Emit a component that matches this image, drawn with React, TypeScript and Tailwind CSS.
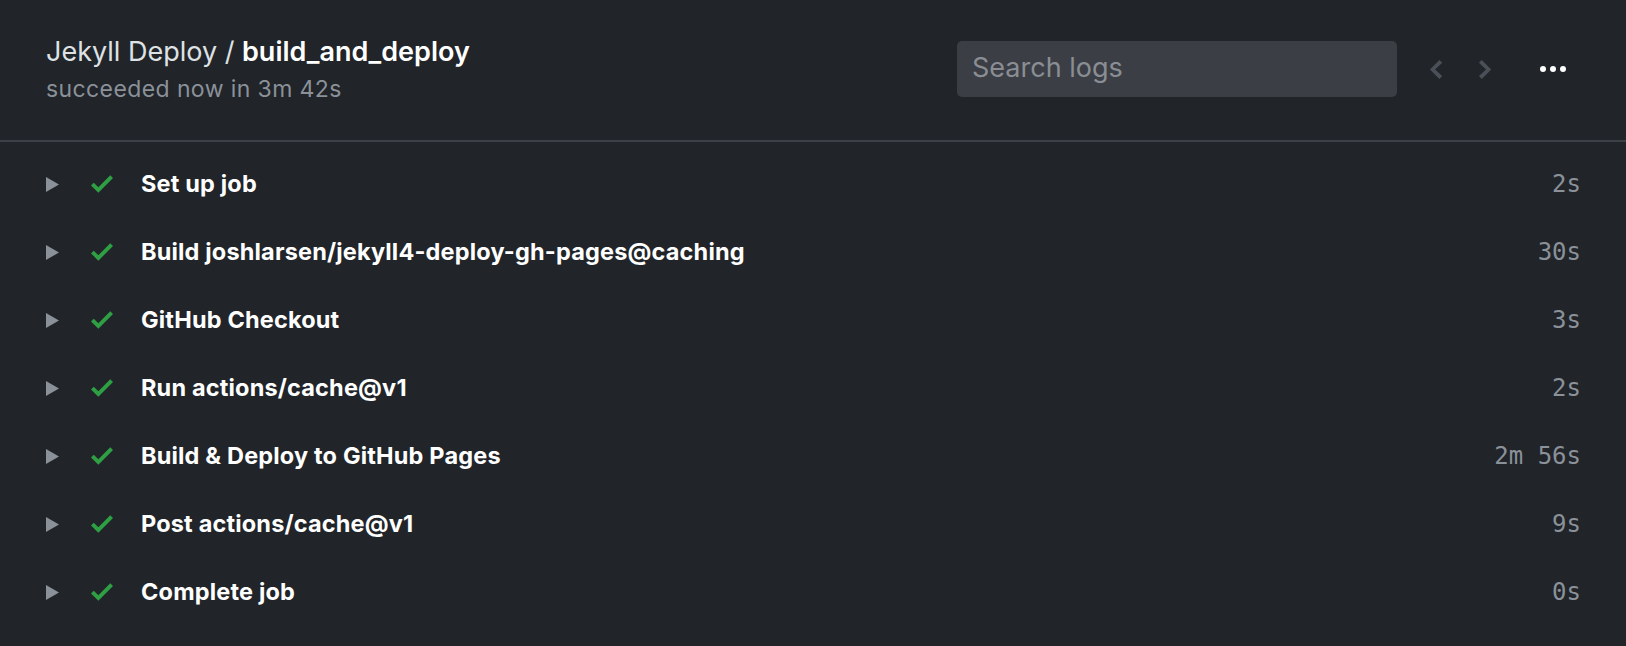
const steps = [
  { name: 'Set up job', time: '2s' },
  { name: 'Build joshlarsen/jekyll4-deploy-gh-pages@caching', time: '30s' },
  { name: 'GitHub Checkout', time: '3s' },
  { name: 'Run actions/cache@v1', time: '2s' },
  { name: 'Build & Deploy to GitHub Pages', time: '2m 56s' },
  { name: 'Post actions/cache@v1', time: '9s' },
  { name: 'Complete job', time: '0s' },
]

function Caret() {
  return (
    <svg width="13" height="15" viewBox="0 0 13 15" className="shrink-0">
      <polygon points="0,0 13,7.5 0,15" fill="#8a9199" />
    </svg>
  )
}

function Check() {
  return (
    <svg width="22" height="18" viewBox="0 3.5 12 9.5" className="shrink-0">
      <path d="M12 5l-8 8-4-4 1.5-1.5L4 10l6.5-6.5L12 5z" fill="#2ea043" />
    </svg>
  )
}

function Chevron({ dir }: { dir: 'left' | 'right' }) {
  return (
    <svg width="14" height="20" viewBox="0 2.5 7.4 10.5" className="shrink-0">
      {dir === 'left' ? (
        <path d="M5.5 3L7 4.5 3.25 8 7 11.5 5.5 13l-5-5 5-5z" fill="#4a5058" />
      ) : (
        <path d="M2 3L0.5 4.5 4.25 8 0.5 11.5 2 13l5-5-5-5z" fill="#4a5058" />
      )}
    </svg>
  )
}

export default function App() {
  return (
    <div
      className="min-h-[646px] w-full bg-[#212429] text-white"
      style={{ fontFamily: 'Inter, "Noto Sans", sans-serif' }}
    >
      <header className="flex h-[142px] items-center justify-between border-b-2 border-[#3c4147] pb-[3px] pl-[46px] pr-[60px]">
        <div>
          <h1 className="text-[27px] leading-[34px] text-[#dfe2e5]">
            Jekyll Deploy / <span className="font-semibold text-white">build_and_deploy</span>
          </h1>
          <p className="mt-[6px] text-[23px] leading-[28px] tracking-[0.4px] text-[#8a9199]">
            succeeded now in 3m 42s
          </p>
        </div>

        <div className="flex items-center">
          <div className="flex h-[56px] w-[440px] items-center rounded-[5px] bg-[#3b3e44] px-[15px]">
            <span className="text-[27px] text-[#8a8e94]">Search logs</span>
          </div>
          <div className="ml-[32px] flex items-center gap-[35px]">
            <Chevron dir="left" />
            <Chevron dir="right" />
          </div>
          <div className="ml-[48px] flex items-center gap-[4px]">
            <span className="h-[6px] w-[6px] rounded-full bg-white" />
            <span className="h-[6px] w-[6px] rounded-full bg-white" />
            <span className="h-[6px] w-[6px] rounded-full bg-white" />
          </div>
        </div>
      </header>

      <ul className="pt-[8px]">
        {steps.map((s) => (
          <li key={s.name} className="flex h-[68px] items-center pl-[46px] pr-[45px]">
            <Caret />
            <span className="ml-[32px] flex">
              <Check />
            </span>
            <span className="ml-[28px] flex-1 text-[23.5px] font-bold tracking-[0.17px] text-white">
              {s.name}
            </span>
            <span
              className="text-[24px] text-[#8a9199]"
              style={{ fontFamily: '"DejaVu Sans Mono", monospace' }}
            >
              {s.time}
            </span>
          </li>
        ))}
      </ul>
    </div>
  )
}
